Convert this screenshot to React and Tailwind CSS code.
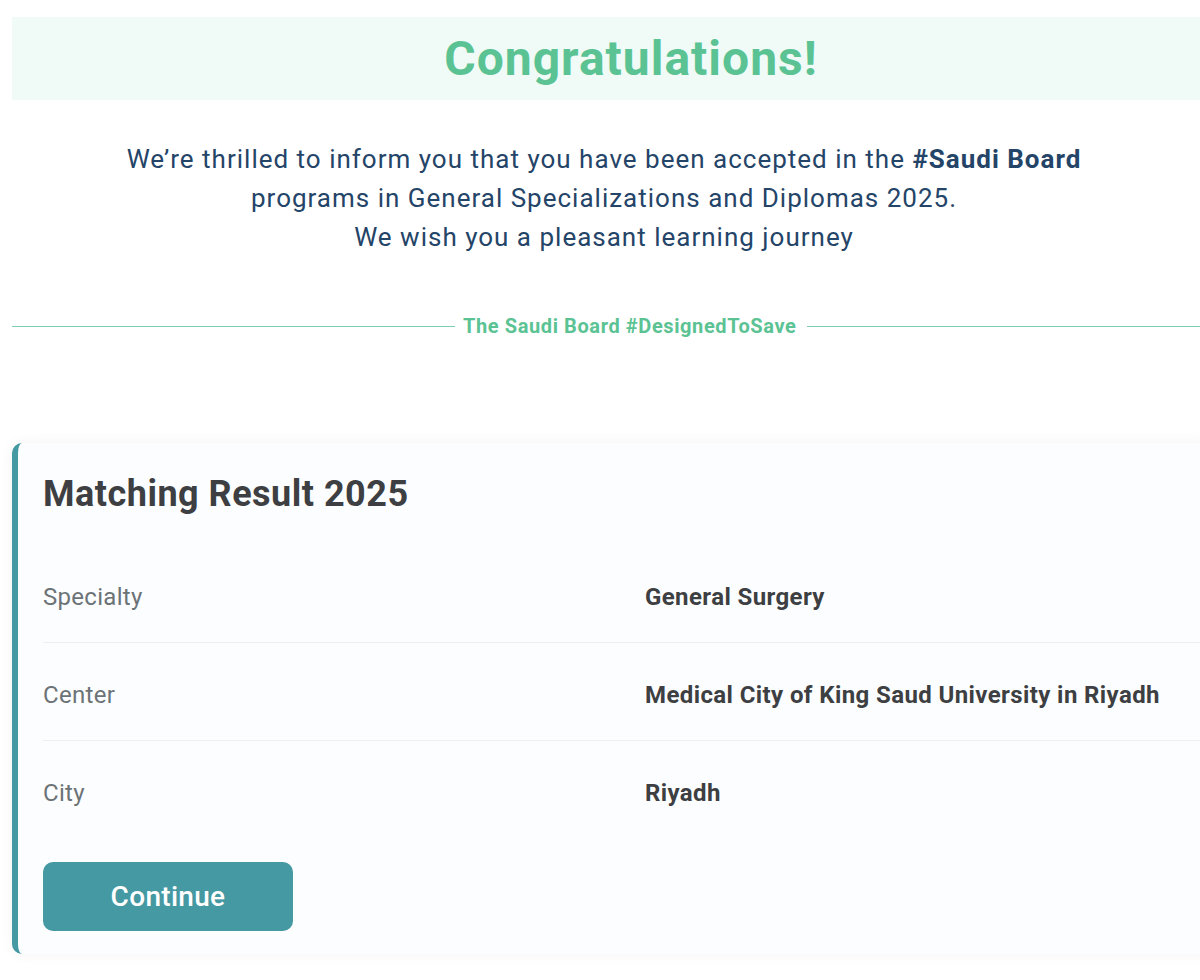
import React from "react";

const rows = [
  { label: "Specialty", value: "General Surgery" },
  { label: "Center", value: "Medical City of King Saud University in Riyadh" },
  { label: "City", value: "Riyadh" },
];

export default function App() {
  return (
    <div
      className="h-[980px] w-[1200px] overflow-hidden bg-white"
      style={{ fontFamily: "Roboto, 'Noto Sans', sans-serif" }}
    >
      {/* banner */}
      <div className="ml-[12px] mt-[17px] flex h-[83px] items-center justify-center bg-[#f0fbf7] pl-[50px]">
        <h1 className="text-[48px] font-bold leading-none tracking-[1px] text-[#5bc393]">Congratulations!</h1>
      </div>

      <p className="mt-[40px] pl-[8px] text-center text-[26px] leading-[39px] tracking-[1px] text-[#244468]">
        We’re thrilled to inform you that you have been accepted in the <span className="font-bold">#Saudi Board</span>
        <br />
        programs in General Specializations and Diplomas 2025.
        <br />
        We wish you a pleasant learning journey
      </p>

      <div className="ml-[12px] mt-[57px] flex h-[24px] items-center gap-[8px]">
        <div className="h-px w-[443px] bg-[#7ccdb4]" />
        <span className="text-[20px] font-bold tracking-[0.6px] text-[#5bc393]">The Saudi Board #DesignedToSave</span>
        <div className="ml-[3px] h-px flex-1 bg-[#7ccdb4]" />
      </div>

      {/* card */}
      <div className="ml-[12px] mt-[105px] w-[1210px] rounded-[10px] border-l-[6px] border-[#4599a3] bg-[#fcfdfe] pb-[23px] pl-[25px] pt-[31px] shadow-[0_0_14px_rgba(0,0,0,0.05)]">
        <h2 className="text-[36px] font-bold leading-[40px] tracking-[0.5px] text-[#3d3f42]">Matching Result 2025</h2>
        <div className="mt-[31px]">
          {rows.map((row, i) => (
            <div
              key={row.label}
              className={
                i < rows.length - 1
                  ? "flex border-b border-[#eef0f2] pb-[30px] pt-[37px] leading-[30px]"
                  : "flex pb-[54px] pt-[37px] leading-[30px]"
              }
            >
              <div className="w-[602px] text-[24px] tracking-[0.3px] text-[#6c7377]">{row.label}</div>
              <div className="text-[24px] font-bold tracking-[0.4px] text-[#3d3f42]">{row.value}</div>
            </div>
          ))}
        </div>
        <button
          type="button"
          className="flex h-[69px] w-[250px] items-center justify-center rounded-[10px] bg-[#4599a3] text-[28px] font-medium tracking-[0.3px] text-white"
        >
          Continue
        </button>
      </div>
    </div>
  );
}
